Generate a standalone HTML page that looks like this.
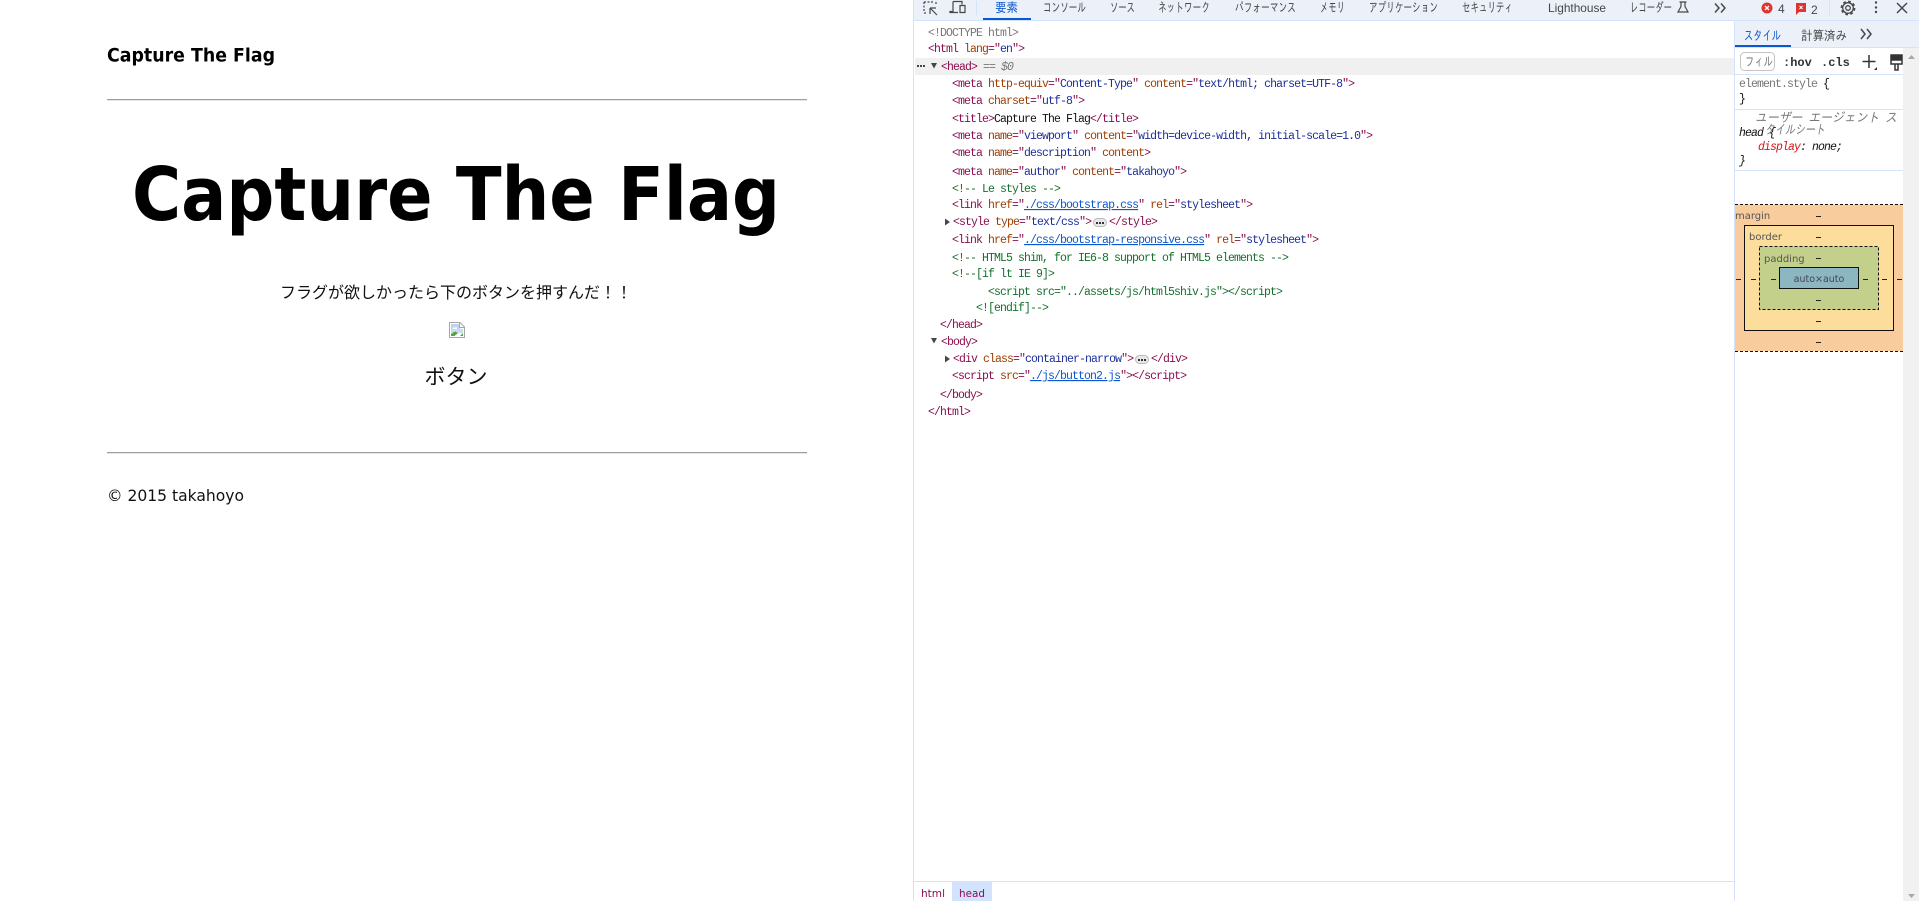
<!DOCTYPE html>
<html lang="ja"><head><meta charset="utf-8"><title>Capture The Flag</title>
<style>
html,body{margin:0;padding:0;background:#fff;width:1919px;height:901px;overflow:hidden}
svg{display:block;position:absolute;left:0;top:0}
text{white-space:pre}
.d{font-family:"DejaVu Sans",sans-serif}
.m{font-family:"Liberation Mono","IPAGothic",monospace;font-size:11.5px;letter-spacing:-.9px;fill:#8b0f50}
.m .a{fill:#9c3d00}.m .v{fill:#1c2f9a}.m .b{fill:#111}
.m .l{fill:#0b57d0;text-decoration:underline}
.c{font-family:"Liberation Mono","IPAGothic",monospace;font-size:11.5px;letter-spacing:-.9px;fill:#15702c}
.t{font-family:"IPAGothic","Noto Sans CJK JP",sans-serif;font-size:13px;fill:#474747}
.s{font-family:"Liberation Sans",sans-serif;font-size:12px;fill:#474747}
.j{font-family:"Noto Sans CJK JP",sans-serif;fill:#111}
.bm{font-family:"DejaVu Sans",sans-serif;font-size:10px;fill:#555}
.dash{stroke:#222;stroke-width:1}
</style></head><body>
<svg width="1919" height="901" viewBox="0 0 1919 901" xmlns="http://www.w3.org/2000/svg">
<rect width="1919" height="901" fill="#fff"/>
<!-- PAGE -->
<text class="d" x="107" y="61.500" font-size="19" font-weight="700" fill="#000" textLength="168" lengthAdjust="spacingAndGlyphs">Capture The Flag</text>
<rect x="107" y="99" width="700" height="1" fill="#9f9f9f"/><rect x="107" y="100" width="700" height="1" fill="#e4e4e4"/>
<text class="d" x="132" y="220" font-size="74" font-weight="700" fill="#000" textLength="648" lengthAdjust="spacingAndGlyphs">Capture The Flag</text>
<text class="j" x="456" y="298" font-size="16" text-anchor="middle">フラグが欲しかったら下のボタンを押すんだ&#xFF01;&#xFF01;</text>
<g transform="translate(449,322)">
<path d="M.5.5H11L15.500 5V15.500H.5Z" fill="#fff" stroke="#a6a6a6"/>
<rect x="2" y="2" width="9" height="9" fill="#bcd3f2"/><rect x="2" y="7" width="12" height="4" fill="#c8daf4"/>
<path d="M4 5.500h4v1.500H3.500z" fill="#fff"/>
<path d="M2 14V12L6 9.500 9 11 5.500 14Z" fill="#55a53a"/><path d="M11 14 14 11V14Z" fill="#55a53a"/>
<path d="M10.500 1V5.500H15" fill="#fff" stroke="#a6a6a6"/>
</g>
<text class="j" x="456" y="384" font-size="21" text-anchor="middle">ボタン</text>
<rect x="107" y="452" width="700" height="1" fill="#9f9f9f"/><rect x="107" y="453" width="700" height="1" fill="#e4e4e4"/>
<text class="d" x="107" y="501" font-size="16" fill="#111" textLength="137" lengthAdjust="spacingAndGlyphs">© 2015 takahoyo</text>

<!-- DEVTOOLS TOOLBAR -->
<rect x="913" y="0" width="1006" height="20" fill="#ebf0f9"/>
<rect x="913" y="20" width="1006" height="1" fill="#d3e3fd"/>
<rect x="913" y="0" width="1" height="901" fill="#d3e3fd"/>
<rect x="1734" y="21" width="1" height="880" fill="#d3e3fd"/>
<rect x="976" y="1" width="1" height="14" fill="#d3e3fd"/>
<g fill="none" stroke="#474747" stroke-width="1.200">
<path d="M924 2h10M924 2v10M936 2v3M924 13h3" stroke-dasharray="2 1.500"/>
<path d="M930 8h6M930 8v6M930 8l7 7"/>
<path d="M953 1.500h9v3M953 1.500v10h-3v1h8M960 5.500h5v7h-5z"/>
</g>
<text class="t" x="995" y="12" style="fill:#0b57d0" textLength="23" lengthAdjust="spacingAndGlyphs">要素</text>
<rect x="983" y="18" width="48" height="2" fill="#0b57d0"/>
<text class="t" x="1043" y="12" textLength="43" lengthAdjust="spacingAndGlyphs">コンソール</text>
<text class="t" x="1110" y="12" textLength="25" lengthAdjust="spacingAndGlyphs">ソース</text>
<text class="t" x="1158" y="12" textLength="52" lengthAdjust="spacingAndGlyphs">ネットワーク</text>
<text class="t" x="1235" y="12" textLength="61" lengthAdjust="spacingAndGlyphs">パフォーマンス</text>
<text class="t" x="1320" y="12" textLength="25" lengthAdjust="spacingAndGlyphs">メモリ</text>
<text class="t" x="1369" y="12" textLength="69" lengthAdjust="spacingAndGlyphs">アプリケーション</text>
<text class="t" x="1462" y="12" textLength="51" lengthAdjust="spacingAndGlyphs">セキュリティ</text>
<text class="s" x="1548" y="12" textLength="58" lengthAdjust="spacingAndGlyphs">Lighthouse</text>
<text class="t" x="1630" y="12" textLength="42" lengthAdjust="spacingAndGlyphs">レコーダー</text>
<path d="M1679.500 2h7M1681 2v4.500l-3 5.500h10l-3-5.500V2" fill="none" stroke="#474747" stroke-width="1.200"/>
<path d="M1715 3.500l4 4.500-4 4.500M1721 3.500l4 4.500-4 4.500" fill="none" stroke="#474747" stroke-width="1.500"/>
<circle cx="1767" cy="8" r="5.500" fill="#dc362e"/>
<path d="M1765 6l4 4M1769 6l-4 4" stroke="#fff" stroke-width="1.300"/>
<text class="s" x="1778" y="13" font-size="11">4</text>
<path d="M1796 3h10v9h-7l-3 3z" fill="#dc362e"/>
<path d="M1799.500 6l3 3M1802.500 6l-3 3" stroke="#fff" stroke-width="1"/>
<text class="s" x="1811" y="14">2</text>
<rect x="1829" y="1" width="1" height="14" fill="#d3e3fd"/>
<circle cx="1848" cy="8" r="2.300" fill="none" stroke="#474747" stroke-width="1.300"/>
<circle cx="1848" cy="8" r="5.300" fill="none" stroke="#474747" stroke-width="1.300"/>
<circle cx="1848" cy="8" r="6.500" fill="none" stroke="#474747" stroke-width="1.800" stroke-dasharray="2.600 2.500"/>
<g fill="#474747"><circle cx="1876" cy="2.500" r="1.200"/><circle cx="1876" cy="7.500" r="1.200"/><circle cx="1876" cy="12" r="1.200"/></g>
<path d="M1897 3l10 10M1907 3l-10 10" stroke="#474747" stroke-width="1.500"/>

<!-- ELEMENTS TREE -->
<rect x="915" y="58" width="819" height="17" fill="#f0f0f0"/>
<g fill="#474747"><rect x="917" y="65" width="2" height="2"/><rect x="920" y="65" width="2" height="2"/><rect x="923" y="65" width="2" height="2"/></g>
<path d="M931 63h6l-3 5.500z" fill="#474747"/>
<path d="M931 338h6l-3 5.500z" fill="#474747"/>
<path d="M945 218.500l5 3.500-5 3.500z" fill="#474747"/>
<path d="M945 355.500l5 3.500-5 3.500z" fill="#474747"/>

<text class="m" x="928" y="36" style="fill:#777">&lt;!DOCTYPE html&gt;</text>
<text class="m" x="928" y="52">&lt;html <tspan class="a">lang</tspan>="<tspan class="v">en</tspan>"&gt;</text>
<text class="m" x="941" y="70">&lt;head&gt;</text><text class="m" x="983" y="70" style="fill:#777">== <tspan font-style="italic">$0</tspan></text>
<text class="m" x="952" y="87">&lt;meta <tspan class="a">http-equiv</tspan>="<tspan class="v">Content-Type</tspan>" <tspan class="a">content</tspan>="<tspan class="v">text/html; charset=UTF-8</tspan>"&gt;</text>
<text class="m" x="952" y="104">&lt;meta <tspan class="a">charset</tspan>="<tspan class="v">utf-8</tspan>"&gt;</text>
<text class="m" x="952" y="122">&lt;title&gt;<tspan class="b">Capture The Flag</tspan>&lt;/title&gt;</text>
<text class="m" x="952" y="139">&lt;meta <tspan class="a">name</tspan>="<tspan class="v">viewport</tspan>" <tspan class="a">content</tspan>="<tspan class="v">width=device-width, initial-scale=1.0</tspan>"&gt;</text>
<text class="m" x="952" y="156">&lt;meta <tspan class="a">name</tspan>="<tspan class="v">description</tspan>" <tspan class="a">content</tspan>&gt;</text>
<text class="m" x="952" y="175">&lt;meta <tspan class="a">name</tspan>="<tspan class="v">author</tspan>" <tspan class="a">content</tspan>="<tspan class="v">takahoyo</tspan>"&gt;</text>
<text class="c" x="952" y="192">&lt;!-- Le styles --&gt;</text>
<text class="m" x="952" y="208">&lt;link <tspan class="a">href</tspan>="<tspan class="l">./css/bootstrap.css</tspan>" <tspan class="a">rel</tspan>="<tspan class="v">stylesheet</tspan>"&gt;</text>
<text class="m" x="953" y="225">&lt;style <tspan class="a">type</tspan>="<tspan class="v">text/css</tspan>"&gt;</text>
<text class="m" x="1109" y="225">&lt;/style&gt;</text>
<text class="m" x="952" y="243">&lt;link <tspan class="a">href</tspan>="<tspan class="l">./css/bootstrap-responsive.css</tspan>" <tspan class="a">rel</tspan>="<tspan class="v">stylesheet</tspan>"&gt;</text>
<text class="c" x="952" y="261">&lt;!-- HTML5 shim, for IE6-8 support of HTML5 elements --&gt;</text>
<text class="c" x="952" y="277">&lt;!--[if lt IE 9]&gt;</text>
<text class="c" x="988" y="295">&lt;script src="../assets/js/html5shiv.js"&gt;&lt;/script&gt;</text>
<text class="c" x="976" y="311">&lt;![endif]--&gt;</text>
<text class="m" x="940" y="328">&lt;/head&gt;</text>
<text class="m" x="941" y="345">&lt;body&gt;</text>
<text class="m" x="953" y="362">&lt;div <tspan class="a">class</tspan>="<tspan class="v">container-narrow</tspan>"&gt;</text>
<text class="m" x="1151" y="362">&lt;/div&gt;</text>
<text class="m" x="952" y="379">&lt;script <tspan class="a">src</tspan>="<tspan class="l">./js/button2.js</tspan>"&gt;&lt;/script&gt;</text>
<text class="m" x="940" y="398">&lt;/body&gt;</text>
<text class="m" x="928" y="415">&lt;/html&gt;</text>
<rect x="1093.500" y="218.500" width="13" height="8" rx="4" fill="#e8e8e8" stroke="#bbb"/>
<g fill="#333"><rect x="1096" y="222" width="2" height="2"/><rect x="1099" y="222" width="2" height="2"/><rect x="1102" y="222" width="2" height="2"/></g>
<rect x="1135.500" y="355.500" width="13" height="8" rx="4" fill="#e8e8e8" stroke="#bbb"/>
<g fill="#333"><rect x="1138" y="359" width="2" height="2"/><rect x="1141" y="359" width="2" height="2"/><rect x="1144" y="359" width="2" height="2"/></g>

<!-- BREADCRUMB -->
<rect x="914" y="881" width="820" height="1" fill="#d3e3fd"/>
<rect x="952" y="882" width="40" height="19" fill="#d3e3fd"/>
<text class="d" x="921" y="897" font-size="11" fill="#8b0f50" textLength="24" lengthAdjust="spacingAndGlyphs">html</text>
<text class="d" x="959" y="897" font-size="11" fill="#8b0f50" textLength="26" lengthAdjust="spacingAndGlyphs">head</text>

<!-- STYLES PANE -->
<rect x="1735" y="21" width="184" height="26" fill="#ebf0f9"/>
<rect x="1735" y="47" width="184" height="1" fill="#d3e3fd"/>
<rect x="1735" y="45" width="56" height="2" fill="#0b57d0"/>
<text class="t" x="1744" y="40" style="fill:#0b57d0" textLength="37" lengthAdjust="spacingAndGlyphs">スタイル</text>
<text class="t" x="1801" y="40" textLength="46" lengthAdjust="spacingAndGlyphs">計算済み</text>
<path d="M1861 29l4 5-4 5M1867 29l4 5-4 5" fill="none" stroke="#474747" stroke-width="1.500"/>
<rect x="1903" y="48" width="16" height="853" fill="#f1f1f1"/>
<path d="M1908 59l3.500-4 3.500 4z" fill="#a8a8a8"/>
<path d="M1908 894h7l-3.500 4z" fill="#a8a8a8"/>
<rect x="1740.500" y="52.500" width="34" height="18" rx="4" fill="#fff" stroke="#c4c4c4"/>
<text class="t" x="1745" y="66" textLength="28" lengthAdjust="spacingAndGlyphs" style="fill:#777">フィル</text>
<text x="1783" y="66" font-family="Liberation Mono,monospace" font-weight="700" font-size="12" fill="#333">:hov</text>
<text x="1821" y="66" font-family="Liberation Mono,monospace" font-weight="700" font-size="12" fill="#333">.cls</text>
<path d="M1869 55v13M1862.500 61.500h13" stroke="#333" stroke-width="1.500"/>
<path d="M1877 70h-3l3-3z" fill="#333"/>
<path d="M1891 55h11v9h-11zM1891 60h11M1895 64h3v6h-3z" fill="#fff" stroke="#333" stroke-width="1.500"/>
<rect x="1891" y="55" width="11" height="5" fill="#333"/>
<rect x="1735" y="74" width="168" height="1" fill="#d3e3fd"/>
<text class="m" x="1739" y="87" style="fill:#777">element.style <tspan style="fill:#111">{</tspan></text>
<text class="m" x="1739" y="102" style="fill:#111">}</text>
<rect x="1735" y="109" width="168" height="1" fill="#d3e3fd"/>
<text class="t" x="1755" y="122" font-style="italic" style="fill:#777" textLength="142" lengthAdjust="spacingAndGlyphs">ユーザー エージェント ス</text>
<text class="t" x="1765" y="134" font-style="italic" style="fill:#777" textLength="60" lengthAdjust="spacingAndGlyphs">タイルシート</text>
<text class="m" x="1739" y="136" font-style="italic" style="fill:#111">head {</text>
<text class="m" x="1758" y="150" font-style="italic" style="fill:#d01818">display<tspan style="fill:#111">: none;</tspan></text>
<text class="m" x="1739" y="164" font-style="italic" style="fill:#111">}</text>
<rect x="1735" y="170" width="168" height="1" fill="#d3e3fd"/>

<!-- BOX MODEL -->
<rect x="1735" y="204.500" width="168" height="146.500" fill="#f9cc9d"/>
<path d="M1735 204.500h168M1735 351.500h168" stroke="#111" stroke-dasharray="3 2" fill="none"/>
<rect x="1744.500" y="225.500" width="149" height="105" fill="#fddd9b" stroke="#111"/>
<rect x="1759.500" y="246.500" width="119" height="63" fill="#c3d08b" stroke="#111" stroke-dasharray="3 2"/>
<rect x="1779.500" y="267.500" width="79" height="21" fill="#8cb6c0" stroke="#111"/>
<text class="bm" x="1735" y="219">margin</text>
<text class="bm" x="1749" y="240">border</text>
<text class="bm" x="1764" y="262">padding</text>
<text x="1819" y="282" font-family="DejaVu Sans,sans-serif" font-size="9.500" fill="#445" text-anchor="middle">auto×auto</text>
<g class="dash">
<path d="M1816 216.500h5M1816 237.500h5M1816 258.500h5M1816 300.500h5M1816 321.500h5M1816 342.500h5"/>
<path d="M1736 279.500h5M1751 279.500h5M1771 279.500h5M1863 279.500h5M1882 279.500h5M1897 279.500h5"/>
</g>
</svg>
</body></html>
